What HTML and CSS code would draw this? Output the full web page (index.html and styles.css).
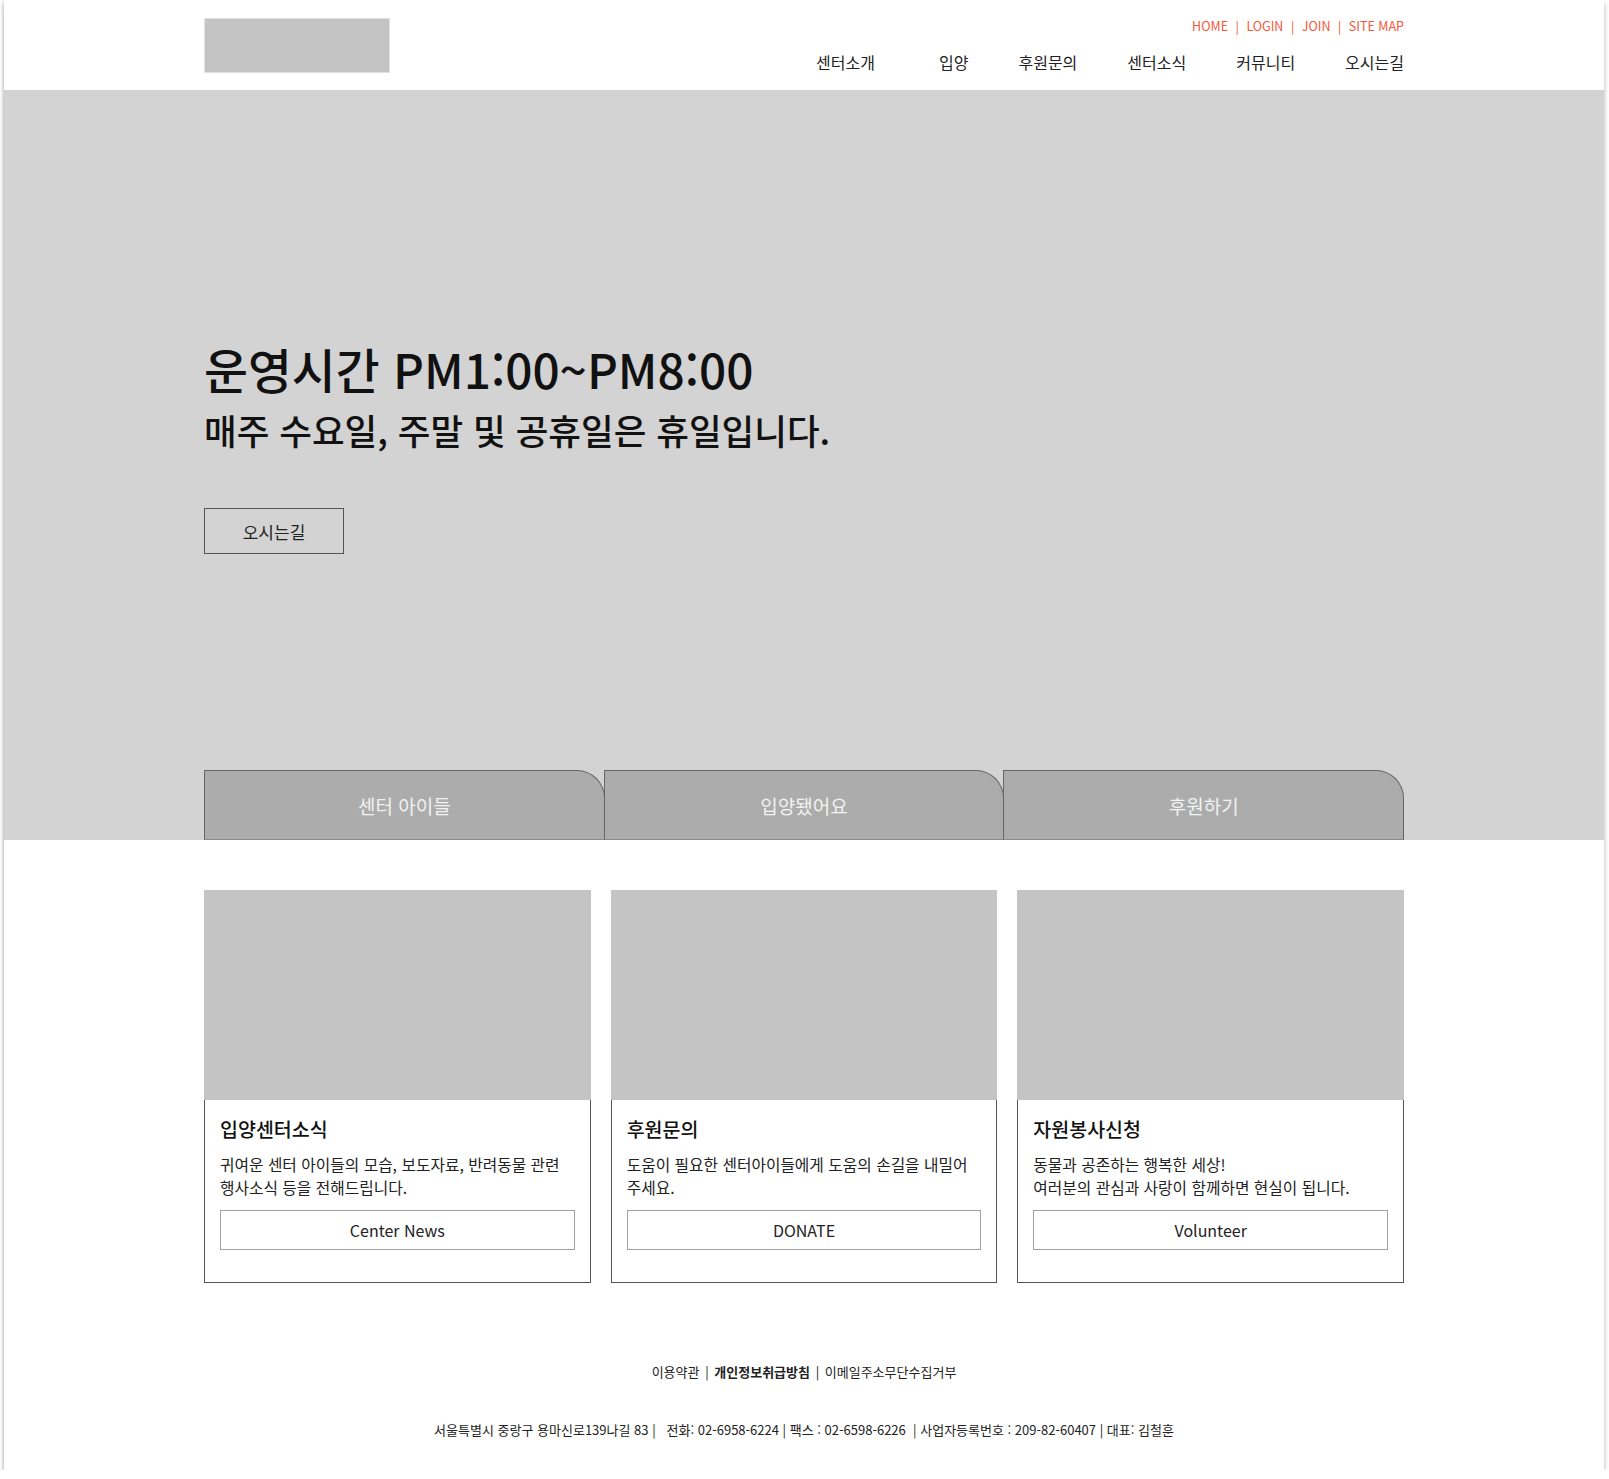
FILE: index.html
```html
<!DOCTYPE html>
<html lang="ko">
<head>
<meta charset="utf-8">
<title>센터</title>
<link rel="stylesheet" href="styles.css">
</head>
<body>
<div class="frame">
  <header class="header">
    <div class="container header-inner">
      <div class="logo"></div>
      <div class="header-right">
        <div class="util">
          <a>HOME</a><span class="sep">|</span><a>LOGIN</a><span class="sep">|</span><a>JOIN</a><span class="sep">|</span><a>SITE MAP</a>
        </div>
        <nav class="gnb">
          <a class="first">센터소개</a>
          <a>입양</a>
          <a>후원문의</a>
          <a>센터소식</a>
          <a>커뮤니티</a>
          <a>오시는길</a>
        </nav>
      </div>
    </div>
  </header>

  <section class="hero">
    <div class="container hero-inner">
      <h1 class="hero-title">운영시간 PM1:00~PM8:00</h1>
      <p class="hero-sub">매주 수요일, 주말 및 공휴일은 휴일입니다.</p>
      <a class="hero-btn">오시는길</a>
      <div class="tabs">
        <div class="tab">센터 아이들</div>
        <div class="tab">입양됐어요</div>
        <div class="tab">후원하기</div>
      </div>
    </div>
  </section>

  <section class="container cards">
    <div class="card">
      <div class="card-img"></div>
      <div class="card-body">
        <h2 class="card-title">입양센터소식</h2>
        <p class="card-desc">귀여운 센터 아이들의 모습, 보도자료, 반려동물 관련<br>행사소식 등을 전해드립니다.</p>
        <a class="card-btn">Center News</a>
      </div>
    </div>
    <div class="card">
      <div class="card-img"></div>
      <div class="card-body">
        <h2 class="card-title">후원문의</h2>
        <p class="card-desc">도움이 필요한 센터아이들에게 도움의 손길을 내밀어<br>주세요.</p>
        <a class="card-btn">DONATE</a>
      </div>
    </div>
    <div class="card">
      <div class="card-img"></div>
      <div class="card-body">
        <h2 class="card-title">자원봉사신청</h2>
        <p class="card-desc">동물과 공존하는 행복한 세상!<br>여러분의 관심과 사랑이 함께하면 현실이 됩니다.</p>
        <a class="card-btn">Volunteer</a>
      </div>
    </div>
  </section>

  <footer class="footer">
    <p class="footer-links">이용약관 <span class="fsep">|</span> <strong>개인정보취급방침</strong> <span class="fsep">|</span> 이메일주소무단수집거부</p>
    <p class="footer-addr">서울특별시 중랑구 용마신로139나길 83 |&nbsp;&nbsp; 전화: 02-6958-6224 | 팩스 : 02-6598-6226 &nbsp;| 사업자등록번호 : 209-82-60407 | 대표: 김철훈</p>
  </footer>
</div>
</body>
</html>
```

FILE: styles.css
```css
* { box-sizing: border-box; }

html, body {
  margin: 0;
  padding: 0;
  background: #fff;
}

body {
  font-family: "Noto Sans CJK KR", "Noto Sans", sans-serif;
  color: #222;
}

a { color: inherit; text-decoration: none; }

.frame {
  width: 1600px;
  height: 1470px;
  margin-left: 4px;
  background: #fff;
  box-shadow: 0 3px 5px rgba(0, 0, 0, 0.3), -1px 0 2px rgba(0, 0, 0, 0.08);
}

.container {
  width: 1200px;
  margin: 0 auto;
}

/* header */
.header { height: 90px; }

.header-inner {
  display: flex;
  justify-content: space-between;
  height: 90px;
}

.logo {
  width: 186px;
  height: 55px;
  margin-top: 18px;
  background: #c4c4c4;
  border: 1px solid #e2e2e2;
}

.header-right {
  display: flex;
  flex-direction: column;
  align-items: flex-end;
}

.util {
  margin-top: 17px;
  font-size: 12.5px;
  line-height: 18px;
  color: #f4583a;
  display: flex;
}

.util .sep { margin: 0 7.5px; }

.gnb {
  display: flex;
  gap: 50px;
  margin-top: 16px;
  font-size: 16px;
  line-height: 22px;
  color: #222;
}

.gnb .first { margin-right: 14px; }

/* hero */
.hero {
  height: 750px;
  background: #d3d3d3;
}

.hero-inner {
  height: 100%;
  display: flex;
  flex-direction: column;
  align-items: flex-start;
  padding-top: 250px;
}

.hero-title {
  margin: 0;
  font-size: 47.75px;
  line-height: 58px;
  font-weight: 500;
  color: #111;
}

.hero-sub {
  margin: 11px 0 0;
  font-size: 35.5px;
  line-height: 42px;
  font-weight: 500;
  color: #111;
}

.hero-btn {
  margin-top: 57px;
  width: 140px;
  height: 46px;
  border: 1px solid #555;
  display: flex;
  align-items: center;
  justify-content: center;
  font-size: 17px;
  color: #222;
}

.tabs {
  margin-top: auto;
  width: 100%;
  display: flex;
}

.tab {
  flex: 1;
  height: 70px;
  background: #acacac;
  border: 1px solid #666;
  border-bottom-color: #8a8a8a;
  border-top-right-radius: 28px;
  display: flex;
  align-items: center;
  justify-content: center;
  font-size: 19px;
  color: #f2f2f2;
}

.tab + .tab { margin-left: -1px; }

/* cards */
.cards {
  margin-top: 50px;
  display: grid;
  grid-template-columns: repeat(3, 1fr);
  gap: 20px;
}

.card-img {
  height: 210px;
  background: #c4c4c4;
}

.card-body {
  border: 1px solid #555;
  border-top: none;
  padding: 16px 15px 32px;
}

.card-title {
  margin: 0;
  font-size: 19.5px;
  line-height: 26px;
  font-weight: 500;
  color: #111;
}

.card-desc {
  margin: 12px 0 0;
  font-size: 15.75px;
  line-height: 22.5px;
  color: #222;
}

.card-btn {
  margin-top: 11px;
  height: 40px;
  border: 1px solid #a0a0a0;
  display: flex;
  align-items: center;
  justify-content: center;
  font-size: 16px;
  color: #222;
}

/* footer */
.footer {
  text-align: center;
  font-size: 13px;
  line-height: 18px;
  color: #222;
}

.footer-links { margin: 80px 0 0; }

.footer-links .fsep { margin: 0 2px; }

.footer-links strong { font-weight: 700; }

.footer-addr { margin: 40px 0 0; }
```
